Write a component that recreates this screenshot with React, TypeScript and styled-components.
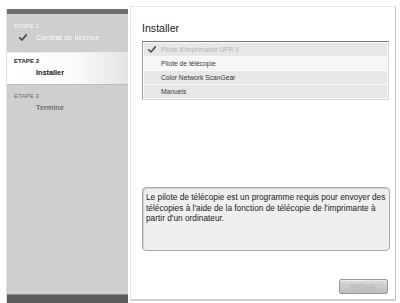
import React from 'react';
import styled, { createGlobalStyle } from 'styled-components';

const GlobalStyle = createGlobalStyle`
  html, body {
    margin: 0;
    padding: 0;
    background: #ffffff;
  }
  body {
    font-family: 'Liberation Sans', Arial, sans-serif;
  }
`

const Window = styled.div`
  width: 400px;
  height: 303px;
  display: flex;
  align-items: stretch;
  background: #ffffff;
  overflow: hidden;
`

const Sidebar = styled.div`
  width: 122px;
  margin-left: 6px;
  margin-top: 9px;
  display: flex;
  flex-direction: column;
  background: #cfcfcf;
  border-left: 1px solid #dedede;
  box-sizing: border-box;
`

const SideBarTop = styled.div`
  height: 5px;
  background: #6e6e6e;
`

const SideBarBottom = styled.div`
  height: 8px;
  margin-top: auto;
  background: #5c5c5c;
  border-top: 1px solid #8a8a8a;
`

const StepList = styled.div`
  display: flex;
  flex-direction: column;
  gap: 2px;
  padding-top: 3px;
`

type StepState = 'done' | 'current' | 'todo'

const Step = styled.div<{ $state: StepState }>`
  height: 33px;
  box-sizing: border-box;
  padding: 4px 0 0 7px;
  background: ${p => p.$state === 'current'
    ? 'linear-gradient(to right, #ffffff 0%, #fbfbfb 55%, #e4e4e4 100%)'
    : 'transparent'};
  border-top: 1px solid ${p => p.$state === 'current' ? '#ececec' : 'transparent'};
  border-bottom: 1px solid ${p => p.$state === 'current' ? '#bdbdbd' : 'transparent'};
`

const StepLabel = styled.div<{ $state: StepState }>`
  font-size: 6px;
  line-height: 8px;
  font-weight: ${p => p.$state === 'current' ? 700 : 400};
  color: ${p => p.$state === 'done' ? '#f7f7f7' : p.$state === 'current' ? '#222222' : '#6e6e6e'};
  letter-spacing: 0.1px;
`

const StepName = styled.div<{ $state: StepState }>`
  display: flex;
  align-items: center;
  height: 10px;
  margin-top: 2px;
  padding-left: ${p => p.$state === 'done' ? '5px' : '22px'};
  gap: 9px;
  font-size: 7.3px;
  font-weight: 700;
  color: ${p => p.$state === 'done' ? '#fafafa' : p.$state === 'current' ? '#202020' : '#707070'};
  text-shadow: ${p => p.$state === 'done' ? '0 0 1px #a8a8a8' : 'none'};
`

const Main = styled.div`
  width: 266px;
  height: 295px;
  margin-left: 2px;
  margin-top: 6px;
  box-sizing: border-box;
  border: 1px solid #e6e6e6;
  border-right-color: #c4c4c4;
  border-bottom: 2px solid #cfcfcf;
  padding: 14px 6px 0 11px;
  display: flex;
  flex-direction: column;
`

const Title = styled.div`
  font-size: 10.6px;
  line-height: 14px;
  color: #1a1a1a;
`

const ListBox = styled.div`
  margin-top: 6px;
  width: 247px;
  box-sizing: border-box;
  border: 1px solid #d6d6d6;
  border-top-color: #7a7a7a;
  border-left-color: #9a9a9a;
  background: #fafafa;
  padding: 1px;
  display: flex;
  flex-direction: column;
  gap: 1px;
`

const Row = styled.div<{ $shade: boolean }>`
  height: 13px;
  display: flex;
  align-items: center;
  background: ${p => p.$shade ? '#e7e7e7' : '#f6f6f6'};
`

const CheckCell = styled.div`
  width: 12px;
  height: 13px;
  display: flex;
  align-items: center;
  justify-content: center;
  margin-left: 2px;
  margin-right: 3px;
`

const RowText = styled.span<{ $disabled: boolean }>`
  font-size: 6.7px;
  color: ${p => p.$disabled ? '#b4b4b4' : '#3a3a3a'};
  white-space: nowrap;
`

const Description = styled.div`
  margin-top: 87px;
  width: 248px;
  height: 64px;
  box-sizing: border-box;
  border: 1px solid #a8a8a8;
  border-radius: 4px;
  background: #efefef;
  box-shadow: inset 1px 1px 1px #d0d0d0;
  padding: 4px 1px 0 3px;
  font-size: 8.3px;
  line-height: 10.5px;
  color: #222222;
`

const Footer = styled.div`
  margin-top: auto;
  margin-bottom: 5px;
  display: flex;
  justify-content: flex-end;
`

const NextButton = styled.button`
  width: 49px;
  height: 15px;
  box-sizing: border-box;
  border: 1px solid #9a9a9a;
  border-radius: 2px;
  background: linear-gradient(to bottom, #dcdcdc 0%, #bcbcbc 100%);
  box-shadow: inset 0 1px 0 #ececec;
  font-family: 'Liberation Sans', Arial, sans-serif;
  font-size: 7.6px;
  color: #eeeeee;
  text-shadow: 0 0 1px #7c7c7c, 0 0 1px #7c7c7c;
  padding: 0;
  margin-right: 1px;
`

function Check({ color }: { color: string }) {
  return (
    <svg width="8" height="7" viewBox="0 0 8 7">
      <path d="M0.8 3.8 L3 6 L7.4 0.8" fill="none" stroke={color} strokeWidth="1.7" strokeLinecap="round" strokeLinejoin="round" />
    </svg>
  )
}

const steps: { label: string, name: string, state: StepState }[] = [
  { label: 'ETAPE 1', name: 'Contrat de licence', state: 'done' },
  { label: 'ETAPE 2', name: 'Installer', state: 'current' },
  { label: 'ETAPE 3', name: 'Terminé', state: 'todo' },
]

const items = [
  { name: "Pilote d'imprimante UFR II", done: true, shade: true },
  { name: 'Pilote de télécopie', done: false, shade: false },
  { name: 'Color Network ScanGear', done: false, shade: true },
  { name: 'Manuels', done: false, shade: true },
]

export default function App() {
  return (<>
    <GlobalStyle />
    <Window>
      <Sidebar>
        <SideBarTop />
        <StepList>
          {steps.map(s => (
            <Step key={s.label} $state={s.state}>
              <StepLabel $state={s.state}>{s.label}</StepLabel>
              <StepName $state={s.state}>
                {s.state === 'done' ? <Check color="#4a4a4a" /> : null}
                {s.name}
              </StepName>
            </Step>
          ))}
        </StepList>
        <SideBarBottom />
      </Sidebar>
      <Main>
        <Title>Installer</Title>
        <ListBox>
          {items.map(it => (
            <Row key={it.name} $shade={it.shade}>
              <CheckCell>{it.done ? <Check color="#555555" /> : null}</CheckCell>
              <RowText $disabled={it.done}>{it.name}</RowText>
            </Row>
          ))}
        </ListBox>
        <Description>
          Le pilote de télécopie est un programme requis pour envoyer des télécopies à l'aide de la fonction de télécopie de l'imprimante à partir d'un ordinateur.
        </Description>
        <Footer>
          <NextButton disabled>Suivant</NextButton>
        </Footer>
      </Main>
    </Window>
  </>)
}
